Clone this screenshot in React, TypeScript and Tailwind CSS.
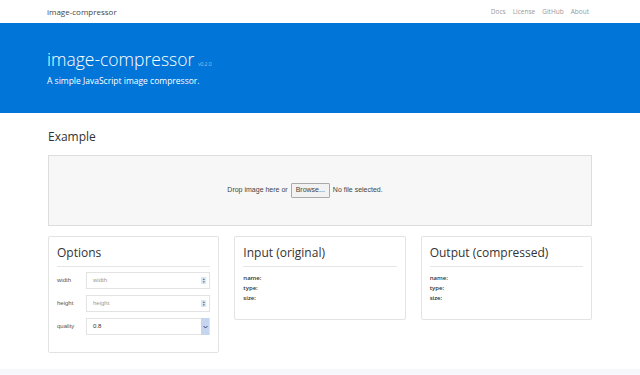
export default function App() {
  return (
    <div className="min-h-[375px] bg-white text-[#292b2c]" style={{ fontFamily: '"Open Sans", "Noto Sans", sans-serif' }}>
      {/* Navbar */}
      <nav className="h-[23px] bg-white">
        <div className="ml-[47px] mr-[51px] flex h-full items-center justify-between">
          <span className="text-[8px] text-[#444]">image-compressor</span>
          <div className="flex gap-[7px] text-[6.5px] text-[#999]">
            <a>Docs</a>
            <a>License</a>
            <a>GitHub</a>
            <a>About</a>
          </div>
        </div>
      </nav>

      {/* Jumbotron */}
      <header className="h-[90px] bg-[#0275d8] text-white">
        <div className="mx-[47px] pt-[25px]">
          <h1 className="flex items-baseline text-[17.5px] leading-[22px] font-light">
            image-compressor
            <small className="ml-[4px] text-[5px] opacity-80">v0.2.0</small>
          </h1>
          <p className="text-[8.5px] leading-[12px]">A simple JavaScript image compressor.</p>
        </div>
      </header>

      <main className="mx-[48px] pt-[16px]">
        <h2 className="text-[12px] leading-[16px] text-[#333]">Example</h2>

        {/* Drop zone */}
        <div className="mt-[10px] flex h-[71px] items-center justify-center border border-[#ddd] bg-[#f7f7f7] text-[7px] text-[#444]" style={{ fontFamily: '"Liberation Sans", Arial, sans-serif' }}>
          <div className="mr-[30px] flex items-center">
            <span>Drop image here or</span>
            <span className="ml-[3px] rounded-[1px] border border-[#aaa] bg-[#f2f2f2] px-[4px] py-[1px]">Browse...</span>
            <span className="ml-[3px]">No file selected.</span>
          </div>
        </div>

        {/* Cards */}
        <div className="mt-[10px] grid grid-cols-3 items-start gap-[15px]">
          <div className="rounded-[2px] border border-[#e3e3e3] px-[8px] pb-[17px] pt-[8px]">
            <h3 className="text-[12px] leading-[16px] text-[#333]">Options</h3>
            <div className="mt-[5px] border-t border-[#e5e5e5]" />
            <div className="mt-[5px] flex flex-col gap-[6px] text-[6px] text-[#555]" style={{ fontFamily: '"Liberation Sans", Arial, sans-serif' }}>
              {[
                ["width", "width", "spin"],
                ["height", "height", "spin"],
                ["quality", "0.8", "select"],
              ].map(([label, value, kind]) => (
                <div key={label} className="flex items-center">
                  <span className="w-[28px]">{label}</span>
                  <div className="ml-[1px] flex h-[17px] flex-1 items-center justify-between border border-[#e3e3e3] bg-white pl-[6px] pr-[3px]">
                    <span className={value === "0.8" ? "text-[#333]" : "text-[#999]"}>{value}</span>
                    {kind === "spin" ? (
                      <span className="flex h-[7px] w-[5px] flex-col items-center justify-center bg-[#dbe4f3] text-[3px] leading-[3px] text-[#556]">
                        <span>▲</span>
                        <span>▼</span>
                      </span>
                    ) : (
                      <span className="-mr-[3px] flex h-[17px] w-[8px] items-center justify-center bg-[#c5d5f0]">
                        <svg width="5" height="4" viewBox="0 0 5 4"><path d="M0.5 1 L2.5 3 L4.5 1" stroke="#336" fill="none" strokeWidth="0.9" /></svg>
                      </span>
                    )}
                  </div>
                </div>
              ))}
            </div>
          </div>

          {["Input (original)", "Output (compressed)"].map((t) => (
            <div key={t} className="rounded-[2px] border border-[#e3e3e3] px-[8px] pb-[16px] pt-[8px]">
              <h3 className="text-[12px] leading-[16px] text-[#333]">{t}</h3>
              <div className="mt-[5px] border-t border-[#e5e5e5]" />
              <dl className="mt-[6px] text-[6px] leading-[10px] font-semibold text-[#333]">
                <dt>name:</dt>
                <dt>type:</dt>
                <dt>size:</dt>
              </dl>
            </div>
          ))}
        </div>
      </main>

      <footer className="mt-[16px] h-[8px] bg-[#f6f8fb]" />
    </div>
  );
}
